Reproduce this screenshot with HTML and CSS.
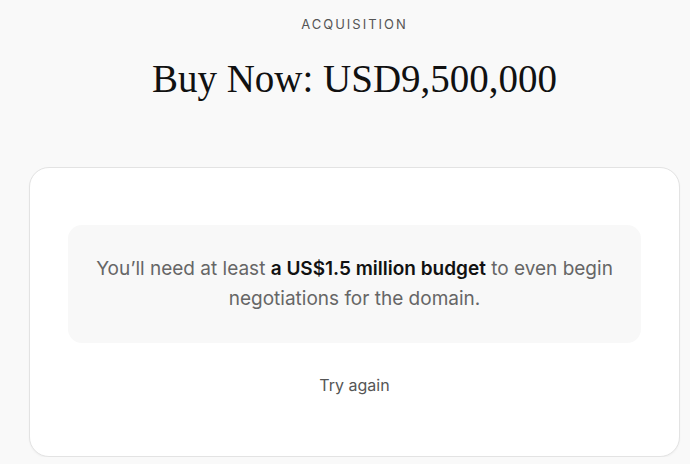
FILE: index.html
```html
<!DOCTYPE html>
<html>
<head>
  <title>Acquisition</title>
  <link rel="stylesheet" href="styles.css">
</head>
<body>
  <div class="page">
    <p class="eyebrow">ACQUISITION</p>
    <h1 class="price">Buy Now: USD9,500,000</h1>

    <div class="card">
      <div class="notice">
        <p>You’ll need at least <strong>a US$1.5 million budget</strong> to even begin negotiations for the domain.</p>
      </div>
      <button type="button" class="retry">Try again</button>
    </div>
  </div>
</body>
</html>
```

FILE: styles.css
```css
body { margin: 0; background-color: #f9f9f9; font-family: Inter, "Noto Sans", sans-serif; color: #222; }
.page { width: 651px; margin-left: 29px; padding-top: 16px; }
.eyebrow { margin: 0; text-align: center; font-size: 13px; letter-spacing: 2px; color: #555; line-height: 16px; }
.price { margin: 25px 0 0; text-align: center; font-family: "Liberation Serif", serif; font-weight: normal; font-size: 39px; line-height: 44px; color: #111; }
.card { margin-top: 66px; background-color: #fff; border: 1px solid #e3e3e3; border-radius: 20px; padding: 57px 38px 53px; box-shadow: 0 1px 2px rgba(0,0,0,0.04); }
.notice { background-color: #f8f8f8; border-radius: 14px; padding: 29px 24px; text-align: center; }
.notice p { margin: 0; font-size: 19px; line-height: 30px; color: #666; }
.notice strong { color: #111; font-weight: 600; }
.retry { display: block; margin: 24px auto 0; background: none; border: none; font-family: Inter, sans-serif; font-size: 16px; color: #555; padding: 8px 12px; }
```
